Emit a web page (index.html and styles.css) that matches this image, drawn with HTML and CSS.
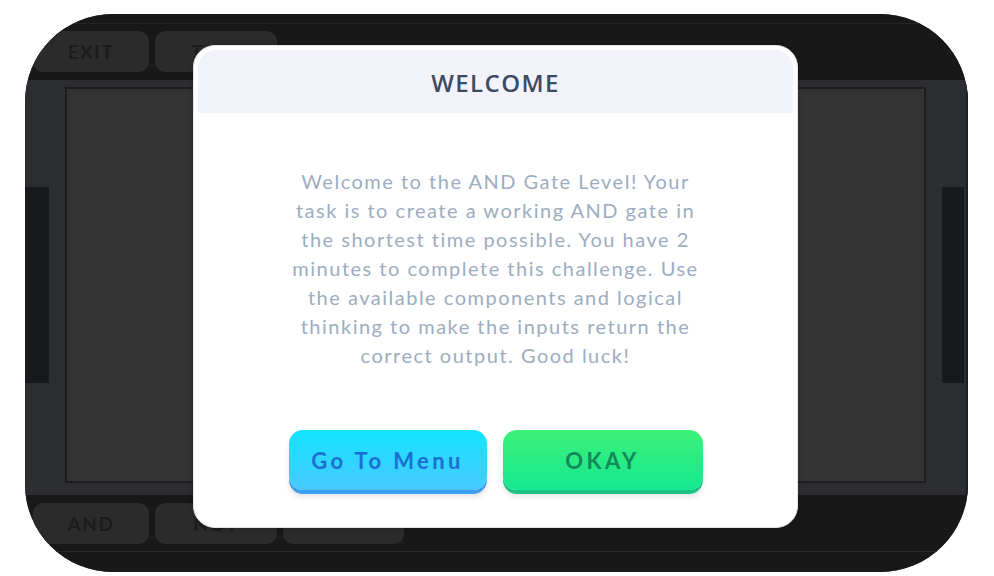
FILE: index.html
```html
<!DOCTYPE html>
<html>
<head>
<meta charset="utf-8">
<link rel="stylesheet" href="styles.css">
</head>
<body>
<div class="device">
  <div class="topbar">
    <div class="toprow">
      <div class="gbtn w116">EXIT</div>
      <div class="gbtn w122">TEST</div>
    </div>
  </div>
  <div class="main">
    <div class="side left"><div class="sidebar"></div></div>
    <div class="canvas"></div>
    <div class="side right"><div class="sidebar"></div></div>
  </div>
  <div class="bottombar">
    <div class="botrow">
      <div class="gbtn w116">AND</div>
      <div class="gbtn w122">NOT</div>
      <div class="gbtn w121"></div>
    </div>
  </div>

  <div class="modal">
    <div class="modal-head">WELCOME</div>
    <p class="modal-text">Welcome to the AND Gate Level! Your<br>task is to create a working AND gate in<br>the shortest time possible. You have 2<br>minutes to complete this challenge. Use<br>the available components and logical<br>thinking to make the inputs return the<br>correct output. Good luck!</p>
    <div class="modal-actions">
      <button class="btn btn-blue">Go To Menu</button>
      <button class="btn btn-green">OKAY</button>
    </div>
  </div>
</div>
</body>
</html>
```

FILE: styles.css
```css
html, body {
  margin: 0;
  padding: 0;
  background: #ffffff;
}
body {
  width: 994px;
  height: 576px;
  overflow: hidden;
  font-family: "Lato", "Liberation Sans", sans-serif;
}
.device {
  position: relative;
  margin: 14px 0 0 25px;
  width: 943px;
  height: 558px;
  border-radius: 88px;
  overflow: hidden;
  background: #2c2d30;
  display: flex;
  flex-direction: column;
}
.topbar {
  height: 66px;
  background: #181818;
  padding-top: 9px;
  box-sizing: border-box;
}
.toprow {
  border-top: 1px solid #22252a;
  padding: 7px 0 0 8px;
  display: flex;
  gap: 6px;
}
.gbtn {
  height: 41px;
  border-radius: 10px;
  background: #2b2b2b;
  color: #1c1c1c;
  font-weight: 700;
  font-size: 19px;
  letter-spacing: 1.5px;
  display: flex;
  align-items: center;
  justify-content: center;
}
.w116 { width: 116px; }
.w122 { width: 122px; }
.w121 { width: 121px; }
.main {
  height: 415px;
  display: flex;
  background: #2c2d30;
}
.side {
  box-sizing: border-box;
  padding-top: 107px;
}
.side.left { width: 40px; }
.side.left .sidebar { width: 24px; }
.side.right {
  width: 42px;
  padding-left: 16px;
  border-right: 2px solid #1c1d1f;
}
.side.right .sidebar { width: 22px; }
.sidebar {
  height: 196px;
  background: #18191a;
}
.canvas {
  flex: 1;
  margin: 7px 0 12px 0;
  background: #333333;
  border: 2px solid #1d1d1d;
}
.bottombar {
  flex: 1;
  background: #181818;
}
.botrow {
  display: flex;
  gap: 6px;
  padding: 8px 0 7px 8px;
  border-bottom: 1px solid #25282d;
}
.modal {
  position: absolute;
  left: 168px;
  top: 31px;
  width: 605px;
  height: 483px;
  box-sizing: border-box;
  background: #ffffff;
  border-radius: 22px;
  border: 1px solid #e2e3ea;
  box-shadow: 0 2px 6px rgba(0,0,0,0.15);
  padding: 4px;
  display: flex;
  flex-direction: column;
  align-items: center;
}
.modal-head {
  align-self: stretch;
  height: 63px;
  background: #f1f2fa;
  border-radius: 18px 18px 0 0;
  display: flex;
  align-items: center;
  justify-content: center;
  font-family: "Open Sans", "Noto Sans", sans-serif;
  font-weight: 600;
  font-size: 24px;
  letter-spacing: 1.4px;
  color: #3d4a62;
  padding-top: 1px;
  box-sizing: border-box;
}
.modal-text {
  margin: 54px 0 0 0;
  text-align: center;
  font-family: "Lato", sans-serif;
  font-size: 20px;
  line-height: 29px;
  letter-spacing: 1.5px;
  color: #9dadc0;
  white-space: nowrap;
}
.modal-actions {
  margin-top: 60px;
  display: flex;
  gap: 16px;
}
.btn {
  height: 60px;
  border: none;
  border-radius: 14px;
  font-family: "Lato", sans-serif;
  font-weight: 700;
  font-size: 22px;
  letter-spacing: 3.4px;
  cursor: pointer;
  padding: 0;
}
.btn-blue {
  width: 198px;
  background: linear-gradient(#14e4ff, #48c9ff);
  color: #1a6fd2;
  box-shadow: 0 4px 0 #3a9ff4, 0 7px 6px rgba(0,0,0,0.10);
}
.btn-green {
  width: 200px;
  background: linear-gradient(#3df178, #15e891);
  color: #12895b;
  box-shadow: 0 4px 0 #1cc482, 0 7px 6px rgba(0,0,0,0.10);
}
```
